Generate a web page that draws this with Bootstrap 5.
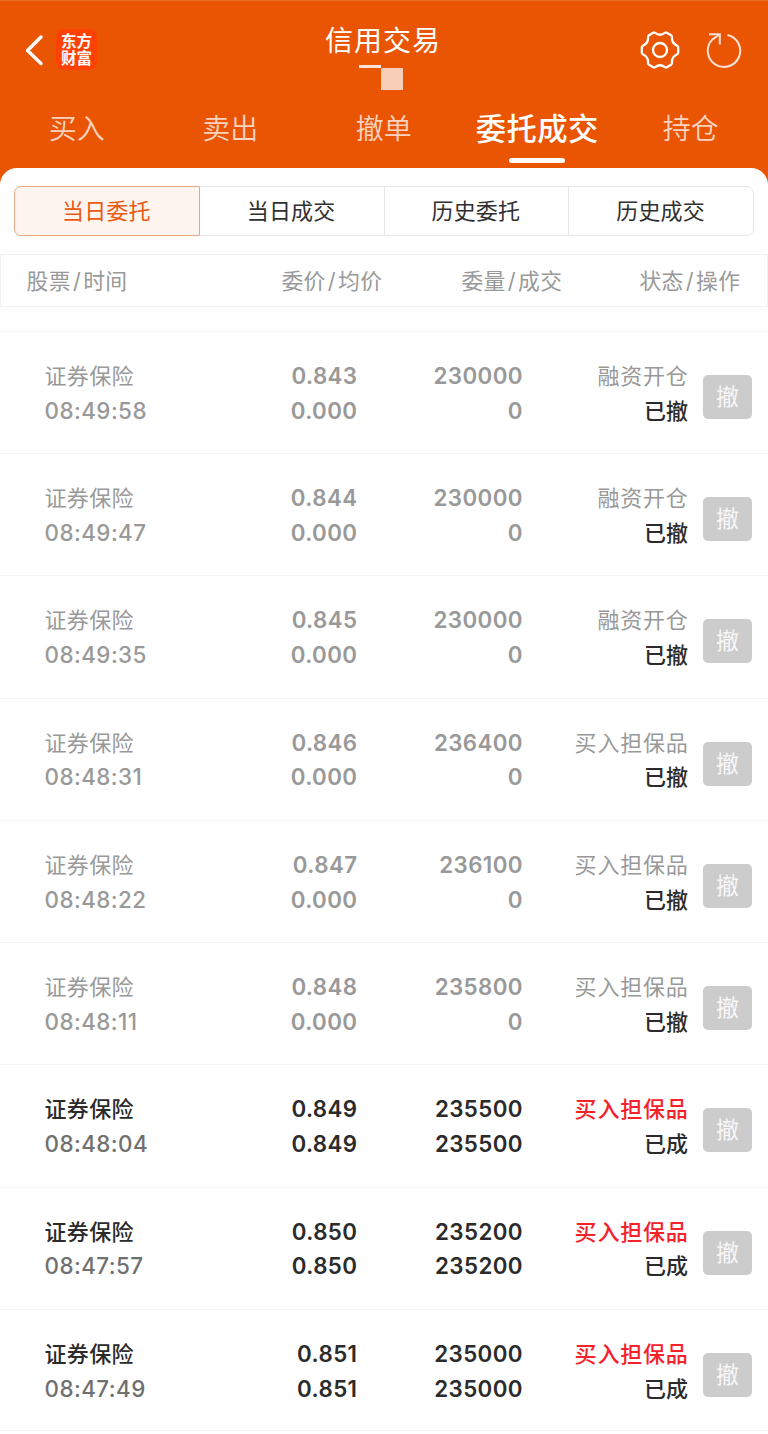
<!DOCTYPE html>
<html lang="zh-CN">
<head>
<meta charset="utf-8">
<meta name="viewport" content="width=device-width, initial-scale=1">
<title>信用交易</title>
<link href="https://cdn.jsdelivr.net/npm/bootstrap@5.3.0/dist/css/bootstrap.min.css" rel="stylesheet">
<style>
  body { font-family: Inter, "Noto Sans CJK SC", sans-serif; background: #ea5504; color: #2b2b2b; overflow: hidden; }
  .app-top { height: 168px; border-top: 1px solid #ee6d26; color: #fff; }
  .title-bar { display: grid; grid-template-columns: 200px 1fr 200px; height: 94px; }
  .back-icon { margin: 33px 0 0 25px; }
  .brand-logo { width: 41px; height: 41px; border-radius: 8px; background: #ff4203; font: 700 15.5px/17px "Noto Sans CJK SC", sans-serif; text-align: center; padding-top: 3px; margin: 28px 0 0 11px; }
  .brand-logo span { display: block; height: 17px; }
  .gear-icon { margin: 29px 24px 0 0; }
  .reload-icon { margin: 31px 26px 0 0; }
  .page-title { font-size: 28px; line-height: 40px; letter-spacing: 1px; padding-top: 20px; margin-left: -2px; }
  .mask-line { width: 22px; height: 3px; background: #fbe3d6; margin-left: 159px; margin-top: 4px; }
  .mask-box { width: 22px; height: 22px; background: #f8ceb8; margin-left: 181px; }
  .main-tabs { height: 73px; }
  .main-tabs .nav-link { color: #fbd3c0; font-size: 28px; line-height: 40px; padding: 14px 0 0; width: 153.5px; font-weight: 350; white-space: nowrap; border-radius: 0; }
  .main-tabs .nav-link.active { color: #fff; background: none; font-size: 30.3px; font-weight: 500; letter-spacing: .4px; }
  .main-tabs .nav-link.active::after { content: ""; display: block; width: 56px; height: 5px; border-radius: 3px; background: #fff; margin: 9px auto 0; }
  .sheet { background: #fff; height: 1266px; border-radius: 17px 17px 0 0; padding-top: 18px; }
  .period { margin: 0 14px; height: 50px; }
  .period .btn { --bs-btn-border-color: #e7e7eb; --bs-btn-color: #303030; --bs-btn-active-color: #ea5a10; --bs-btn-active-bg: #fff5f0; --bs-btn-active-border-color: #e9a886; --bs-btn-border-radius: 7px; font-size: 22px; line-height: 32px; padding: 8px 1px 8px 0; border-width: 1.5px; flex: 1 1 0; width: 0; letter-spacing: .2px; }
  .col-heads { margin-top: 18px; height: 53px; border: 1px solid #f2f2f2; color: #999; font-size: 21.8px; line-height: 52px; padding-left: 25.5px; display: grid; grid-template-columns: 169px 187px 180px 178px; letter-spacing: .4px; }
  .col-heads i { font-style: normal; margin: 0 2px; }
  .gap-row { height: 24px; }
  .order-row { display: grid; grid-template-columns: 212px 100.5px 165.5px 165.5px 49px; padding: 27px 0 0 44.5px; height: 122.23px; border-top: 1px solid #f3f3f3; font-size: 22px; line-height: 34.8px; font-weight: 500; color: #999; white-space: nowrap; }
  .order-row:last-child { border-bottom: 1px solid #f3f3f3; }
  .order-row.filled { color: #2b2b2b; }
  .order-row.filled .clock { color: #707070; }
  .order-row.filled .kind { color: #f5222b; }
  .num { letter-spacing: .4px; font-size: 22.3px; font-weight: 600; }
  .clock { letter-spacing: .45px; font-size: 22.4px; font-weight: 550; }
  .num.text-end { margin-right: -.4px; }
  .state { color: #2b2b2b; }
  .kind, .col-zh { font-weight: 400; letter-spacing: .35px; }
  .kind { letter-spacing: .8px; margin-right: -.6px; }
  .filled .kind, .filled .col-zh { font-weight: 500; }
  .btn-cancel { width: 49px; height: 44px; margin: 16px 0 0 15px; padding: 0; border: 0; border-radius: 5px; background: #ccc !important; color: #f7f7f7 !important; font-size: 23px; line-height: 44px; }
</style>
</head>
<body>
<header class="app-top">
  <div class="title-bar">
    <div class="d-flex align-items-start">
      <svg class="back-icon" width="20" height="32" viewBox="0 0 20 32" fill="none" stroke="#fff" stroke-width="3.4" stroke-linecap="round" stroke-linejoin="round"><path d="M16 3 2.500 16.500 16 29.500"/></svg>
      <div class="brand-logo"><span>东方</span><span>财富</span></div>
    </div>
    <div>
      <div class="page-title text-center">信用交易</div>
      <div class="mask-line"></div>
      <div class="mask-box"></div>
    </div>
    <div class="d-flex justify-content-end">
      <svg class="gear-icon" width="40" height="40" viewBox="0 0 40 40" fill="none" stroke="#fff" stroke-width="2.3" stroke-linejoin="round"><path d="M15.200 2.900Q20 6.500 24.800 2.900Q26 2.100 27.200 2.900L31 5.200Q32.200 6 32 7.500Q31.500 13 36.800 15.500Q38.200 16.200 38.200 17.500V22.500Q38.200 23.800 36.800 24.500Q31.500 27 32 32.500Q32.200 34 31 34.800L27.200 37.100Q26 37.900 24.800 37.100Q20 33.500 15.200 37.100Q14 37.900 12.800 37.100L9 34.800Q7.800 34 8 32.500Q8.500 27 3.200 24.500Q1.800 23.800 1.800 22.500V17.500Q1.800 16.200 3.200 15.500Q8.500 13 8 7.500Q7.800 6 9 5.200L12.800 2.900Q14 2.100 15.200 2.900Z"/><circle cx="20" cy="20" r="7"/></svg>
      <svg class="reload-icon" width="38" height="38" viewBox="0 0 38 38" fill="none" stroke="#fde2d4" stroke-width="2"><path d="M23.500 2.900A16.200 16.200 0 1 1 8.200 7.600L15.500 2.500"/><path d="M5 2.300H15.800V12.500"/></svg>
    </div>
  </div>
  <nav class="nav nav-pills main-tabs flex-nowrap text-center">
    <a class="nav-link" href="#">买入</a>
    <a class="nav-link" href="#">卖出</a>
    <a class="nav-link" href="#">撤单</a>
    <a class="nav-link active" href="#">委托成交</a>
    <a class="nav-link" href="#">持仓</a>
  </nav>
</header>
<main class="sheet">
  <div class="btn-group d-flex period">
    <button class="btn active">当日委托</button>
    <button class="btn">当日成交</button>
    <button class="btn">历史委托</button>
    <button class="btn">历史成交</button>
  </div>
  <div class="col-heads">
    <span>股票<i>/</i>时间</span>
    <span class="text-end">委价<i>/</i>均价</span>
    <span class="text-end">委量<i>/</i>成交</span>
    <span class="text-end">状态<i>/</i>操作</span>
  </div>
  <div class="gap-row"></div>
  <div id="orders"></div>
</main>
<script src="https://cdn.jsdelivr.net/npm/bootstrap@5.3.0/dist/js/bootstrap.bundle.min.js"></script>
<script>
  // time, order price, average price, order volume, filled volume, kind, state
  const orders = [
    ["08:49:58", "0.843", "0.000", "230000", "0", "融资开仓", "已撤"],
    ["08:49:47", "0.844", "0.000", "230000", "0", "融资开仓", "已撤"],
    ["08:49:35", "0.845", "0.000", "230000", "0", "融资开仓", "已撤"],
    ["08:48:31", "0.846", "0.000", "236400", "0", "买入担保品", "已撤"],
    ["08:48:22", "0.847", "0.000", "236100", "0", "买入担保品", "已撤"],
    ["08:48:11", "0.848", "0.000", "235800", "0", "买入担保品", "已撤"],
    ["08:48:04", "0.849", "0.849", "235500", "235500", "买入担保品", "已成"],
    ["08:47:57", "0.850", "0.850", "235200", "235200", "买入担保品", "已成"],
    ["08:47:49", "0.851", "0.851", "235000", "235000", "买入担保品", "已成"]
  ];
  document.getElementById("orders").innerHTML = orders.map(([t, p, a, v, f, k, s]) => `
    <div class="order-row ${s === "已成" ? "filled" : ""}">
      <div><div class="col-zh">证券保险</div><div class="num clock">${t}</div></div>
      <div class="num text-end">${p}<br>${a}</div>
      <div class="num text-end">${v}<br>${f}</div>
      <div class="text-end"><div class="kind">${k}</div><div class="state">${s}</div></div>
      <button class="btn btn-cancel">撤</button>
    </div>`).join("");
</script>
</body>
</html>
